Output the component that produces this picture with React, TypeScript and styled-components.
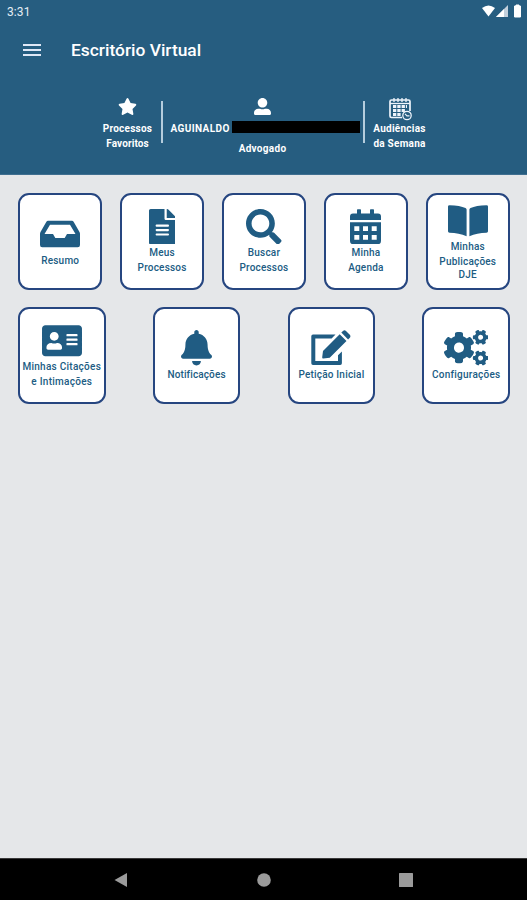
import React from "react";
import styled, { createGlobalStyle } from "styled-components";
import type { ComponentType } from "react";
import {
  FaFileAlt,
  FaSearch,
  FaAddressCard,
  FaBell,
  FaCogs,
  FaStar,
  FaUserAlt,
} from "react-icons/fa";

const GlobalStyle = createGlobalStyle`
  * { box-sizing: border-box; }
  body { margin: 0; background: #e5e7e9; font-family: Roboto, "Noto Sans", sans-serif; }
`;

const Screen = styled.div`
  width: 527px;
  height: 900px;
  display: flex;
  flex-direction: column;
  overflow: hidden;
  background: #e5e7e9;
`;

const Header = styled.header`
  height: 175px;
  flex: none;
  background: #265d80;
  color: #fff;
  border-bottom: 1px solid #3f6f90;
`;

const StatusBar = styled.div`
  height: 24px;
  display: flex;
  align-items: center;
  justify-content: space-between;
  padding: 0 4px 0 7px;
  font-size: 12px;
  color: #e4edf5;
`;

const Clock = styled.span`
  line-height: 23px;
  letter-spacing: 0.1px;
`;

const StatusIcons = styled.svg`
  width: 42px;
  height: 14px;
  margin-top: -3px;
`;

const AppBar = styled.div`
  height: 53px;
  display: flex;
  align-items: center;
  padding-left: 23px;
`;

const MenuIcon = styled.span`
  width: 18px;
  height: 12px;
  margin: -2px 30px 0 0;
  display: flex;
  flex-direction: column;
  justify-content: space-between;
`;

const MenuLine = styled.i`
  height: 2px;
  background: #dfe8f6;
`;

const Title = styled.h1`
  margin: -1px 0 0;
  font-size: 17.4px;
  font-weight: 500;
  line-height: 24px;
`;

const Summary = styled.div`
  display: flex;
  justify-content: center;
  padding: 20px 0 0 2px;
  height: 92px;
`;

const SummaryItem = styled.div<{ $width: number }>`
  width: ${(p) => p.$width}px;
  display: flex;
  flex-direction: column;
  align-items: center;
`;

const SummaryIcon = styled.div<{ $drop?: number }>`
  height: 24px;
  padding-top: ${(p) => p.$drop ?? 0}px;
  display: flex;
  align-items: flex-start;
  justify-content: center;
`;

const SummaryText = styled.span<{ $spacing?: number }>`
  font-size: 10px;
  font-weight: 700;
  line-height: 15px;
  white-space: nowrap;
  letter-spacing: ${(p) => p.$spacing ?? 0.25}px;
`;

const Divider = styled.div`
  width: 2px;
  height: 42px;
  margin-top: 4px;
  background: #b5cddd;
`;

const NameRow = styled.div`
  display: flex;
  height: 20px;
  width: 189px;
  justify-content: space-between;
  margin-left: 5px;
`;

const Redaction = styled.span`
  width: 128px;
  height: 12px;
  background: #000;
`;

const Main = styled.main`
  flex: 1;
  padding: 18px 17px 0 18px;
  display: flex;
  flex-direction: column;
  gap: 17px;
`;

const CardRow = styled.div`
  display: flex;
  justify-content: space-between;
`;

const Card = styled.button<{ $wide?: boolean }>`
  width: ${(p) => (p.$wide ? 87.5 : 84.4)}px;
  height: 97px;
  padding: 0;
  border: 2px solid #264680;
  border-radius: 11px;
  background: #fff;
  color: #205c83;
  font-family: inherit;
  display: flex;
  flex-direction: column;
  align-items: center;
  justify-content: center;
`;

const CardIcon = styled.span<{ $width: number }>`
  display: flex;
  flex: none;

  svg {
    width: ${(p) => p.$width}px;
    height: 35.5px;
  }
`;

const CardLine = styled.span<{ $tight?: boolean; $spacing: number }>`
  font-size: 10px;
  font-weight: 500;
  line-height: ${(p) => (p.$tight ? 12 : 15)}px;
  padding-top: 1px;
  margin-bottom: -1px;
  letter-spacing: ${(p) => p.$spacing}px;
  white-space: nowrap;
`;

const NavBar = styled.nav`
  height: 42px;
  flex: none;
  background: #000;
  border-top: 1px solid #3a3a3a;
  display: flex;
  align-items: center;
  justify-content: space-between;
  padding: 0 114px;
`;

const NavIcon = styled.svg`
  width: 14px;
  height: 14px;
  fill: #9b9b9b;
`;

function InboxIcon() {
  return (
    <svg viewBox="0 0 40 35.5" fill="currentColor" fillRule="evenodd">
      <path d="M8 4.700H32Q33 4.700 33.600 5.700L39.500 16Q40 17 40 18V29Q40 31.300 37.700 31.300H2.300Q0 31.300 0 29V18Q0 17 .5 16L6.400 5.700Q7 4.700 8 4.700ZM10 8.800L4.500 18H13L15.300 22H24.700L27 18H35.500L30 8.800Z" />
    </svg>
  );
}

function CalendarIcon() {
  return (
    <svg viewBox="0 0 31 35.5" fill="currentColor" fillRule="evenodd">
      <path d="M7 1Q7 .3 7.700 .3H10.300Q11 .3 11 1V4.500H20V1Q20 .3 20.700 .3H23.300Q24 .3 24 1V4.500H28Q31 4.500 31 7.500V11H0V7.500Q0 4.500 3 4.500H7Z" />
      <path d="M0 13.300H31V32Q31 35.200 28 35.200H3Q0 35.200 0 32ZM4.300 17.200V22H9.300V17.200ZM13 17.200V22H18V17.200ZM21.700 17.200V22H26.700V17.200ZM4.300 26V30.800H9.300V26ZM13 26V30.800H18V26ZM21.700 26V30.800H26.700V26Z" />
    </svg>
  );
}

function BookIcon() {
  return (
    <svg viewBox="0 0 40 35.5" fill="currentColor">
      <path d="M1.500 2.200Q12 2.500 17.500 5Q18.600 5.500 18.600 6.500V33.200Q11 30 1.500 29.700Q0 29.600 0 28.200V3.600Q0 2.200 1.500 2.200Z" />
      <path d="M38.500 2.200Q28 2.500 22.500 5Q21.400 5.500 21.400 6.500V33.200Q29 30 38.500 29.700Q40 29.600 40 28.200V3.600Q40 2.200 38.500 2.200Z" />
    </svg>
  );
}

function EditIcon() {
  return (
    <svg viewBox="0 0 40 35.5" fill="currentColor">
      <path d="M24.500 4.500H2Q.3 4.500 .3 6.200V33.300Q.3 35 2 35H29.200Q30.900 35 30.900 33.300V21.500L27 25.300V31H4.300V8.500H20.600Z" />
      <path d="M28.700 4.200L35.500 11L18.700 27.700L12.300 28.500Q11 28.600 11.200 27.300L12 20.900Z" />
      <path d="M30.300 2.600L32 .9Q33.500 -.4 35 1L38.800 4.800Q40.100 6.200 38.800 7.700L37.100 9.400Z" />
    </svg>
  );
}

type Item = { icon: ComponentType; width: number; lines: string[]; spacing?: number };

const firstRow: Item[] = [
  { icon: InboxIcon, width: 40, lines: ["Resumo"] },
  { icon: FaFileAlt, width: 26.6, lines: ["Meus", "Processos"] },
  { icon: FaSearch, width: 35.5, lines: ["Buscar", "Processos"] },
  { icon: CalendarIcon, width: 31, lines: ["Minha", "Agenda"] },
  { icon: BookIcon, width: 40, lines: ["Minhas", "Publicações", "DJE"] },
];

const secondRow: Item[] = [
  { icon: FaAddressCard, width: 40, lines: ["Minhas Citações", "e Intimações"], spacing: 0.27 },
  { icon: FaBell, width: 31, lines: ["Notificações"], spacing: 0.12 },
  { icon: EditIcon, width: 40, lines: ["Petição Inicial"] },
  { icon: FaCogs, width: 44.4, lines: ["Configurações"], spacing: 0.25 },
];

function MenuCard({ item, wide }: { item: Item; wide?: boolean }) {
  const Icon = item.icon;
  return (
    <Card $wide={wide}>
      <CardIcon $width={item.width}>
        <Icon />
      </CardIcon>
      {item.lines.map((text, i) => (
        <CardLine key={text} $tight={i === 2} $spacing={item.spacing ?? 0.2}>
          {text}
        </CardLine>
      ))}
    </Card>
  );
}

function CalendarClock() {
  return (
    <svg width="24" height="24" viewBox="0 0 24 24" fill="none" stroke="#eef4fb">
      <path d="M14 20.5H3.5A1.5 1.5 0 0 1 2 19V4.500A1.500 1.500 0 0 1 3.500 3H20.500A1.500 1.500 0 0 1 22 4.500V14" strokeWidth="1.700" />
      <path d="M2 6.500H22" strokeWidth="1.300" />
      <path d="M6 1V5M10 1V5M14 1V5M18 1V5" strokeWidth="1.300" />
      <path d="M5 9.500H19M5 13.500H17M5 17.500H13" strokeWidth="2.900" strokeDasharray="3.300 1" />
      <circle cx="19" cy="18.500" r="4.200" strokeWidth="1.300" fill="#265d80" />
      <path d="M17 16.800L19 18.800H21.500" strokeWidth="1.200" />
    </svg>
  );
}

export default function App() {
  return (
    <Screen>
      <GlobalStyle />
      <Header>
        <StatusBar>
          <Clock>3:31</Clock>
          <StatusIcons viewBox="0 0 42 14">
            <path d="M1 4Q7.500 -1 14 4L7.500 12.500Z" fill="#fff" />
            <path d="M15 13L27 1V13Z" fill="#c3d0dc" />
            <path d="M15 13L23 5V13Z" fill="#fff" />
            <path d="M33.500 2H35V1H38V2H39.500V13H33.500Z" fill="#fff" stroke="#fff" strokeLinejoin="round" />
          </StatusIcons>
        </StatusBar>
        <AppBar>
          <MenuIcon>
            <MenuLine />
            <MenuLine />
            <MenuLine />
          </MenuIcon>
          <Title>Escritório Virtual</Title>
        </AppBar>
        <Summary>
          <SummaryItem $width={66}>
            <SummaryIcon>
              <FaStar size={19} />
            </SummaryIcon>
            <SummaryText>Processos</SummaryText>
            <SummaryText $spacing={0.1}>Favoritos</SummaryText>
          </SummaryItem>
          <Divider />
          <SummaryItem $width={200}>
            <SummaryIcon $drop={1}>
              <FaUserAlt size={17} />
            </SummaryIcon>
            <NameRow>
              <SummaryText $spacing={0.4}>AGUINALDO</SummaryText>
              <Redaction />
            </NameRow>
            <SummaryText $spacing={0.3}>Advogado</SummaryText>
          </SummaryItem>
          <Divider />
          <SummaryItem $width={70}>
            <SummaryIcon>
              <CalendarClock />
            </SummaryIcon>
            <SummaryText>Audiências</SummaryText>
            <SummaryText>da Semana</SummaryText>
          </SummaryItem>
        </Summary>
      </Header>
      <Main>
        <CardRow>
          {firstRow.map((item) => (
            <MenuCard key={item.lines[0]} item={item} />
          ))}
        </CardRow>
        <CardRow>
          {secondRow.map((item) => (
            <MenuCard key={item.lines[0]} item={item} wide />
          ))}
        </CardRow>
      </Main>
      <NavBar>
        <NavIcon viewBox="0 0 14 14">
          <path d="M0.500 7L13 0V14Z" />
        </NavIcon>
        <NavIcon viewBox="0 0 14 14">
          <circle cx="7" cy="7" r="6.800" />
        </NavIcon>
        <NavIcon viewBox="0 0 14 14">
          <rect width="14" height="14" rx="0.500" />
        </NavIcon>
      </NavBar>
    </Screen>
  );
}
